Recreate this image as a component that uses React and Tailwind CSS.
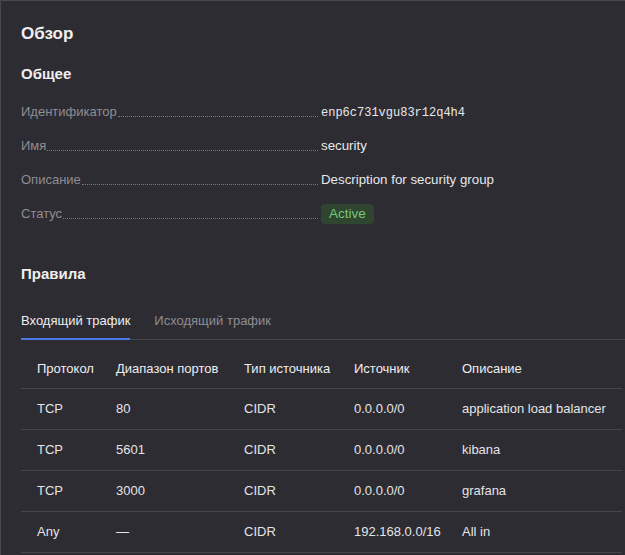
import React, { useState } from 'react';

const info = [
  { label: 'Идентификатор', value: 'enp6c731vgu83r12q4h4', mono: true },
  { label: 'Имя', value: 'security' },
  { label: 'Описание', value: 'Description for security group' },
  { label: 'Статус', badge: 'Active' },
];

const rules = [
  { proto: 'TCP', ports: '80', type: 'CIDR', source: '0.0.0.0/0', desc: 'application load balancer' },
  { proto: 'TCP', ports: '5601', type: 'CIDR', source: '0.0.0.0/0', desc: 'kibana' },
  { proto: 'TCP', ports: '3000', type: 'CIDR', source: '0.0.0.0/0', desc: 'grafana' },
  { proto: 'Any', ports: '—', type: 'CIDR', source: '192.168.0.0/16', desc: 'All in' },
];

const cols = 'grid grid-cols-[79px_128px_110px_108px_1fr]';

export default function App() {
  const [tab, setTab] = useState('in');

  return (
    <div
      className="min-h-screen bg-[#2d2c32] border-t border-l border-[#48474d] pl-[20px] pt-[22px] text-[#e4e4e6] text-[13px]"
      style={{ fontFamily: '"Liberation Sans", Arial, sans-serif' }}
    >
      {/* Header */}
      <h1 className="text-[17px] font-bold leading-[22px] text-[#f0f0f2]">Обзор</h1>
      <h2 className="mt-[19px] text-[15px] font-semibold leading-[20px] text-[#f0f0f2]">Общее</h2>

      {/* Общая информация */}
      <div className="mt-[11px] pr-[3px]">
        {info.map((row) => (
          <div key={row.label} className="flex items-center h-[34px]">
            <div className="flex items-end w-[297px] shrink-0">
              <span className="text-[#8e8d93] leading-[18px]">{row.label}</span>
              <span className="flex-1 mb-[4px] ml-[1px] border-b border-dotted border-[#77767c]" />
            </div>
            <div className="ml-[3px]">
              {row.mono && (
                <span className="text-[12px] text-[#e8e8ea]" style={{ fontFamily: '"Liberation Mono", monospace' }}>
                  {row.value}
                </span>
              )}
              {!row.mono && row.value && <span className="text-[13.3px] text-[#e8e8ea]">{row.value}</span>}
              {row.badge && (
                <span className="inline-flex items-center h-[20px] px-[8px] rounded-[4px] bg-[#30452f] text-[13.5px] text-[#74c878]">
                  {row.badge}
                </span>
              )}
            </div>
          </div>
        ))}
      </div>

      {/* Правила */}
      <h2 className="mt-[33px] text-[15px] font-semibold leading-[20px] text-[#f0f0f2]">Правила</h2>

      <div className="mt-[27px] flex gap-[24px] border-b border-[#46454b]">
        <button
          onClick={() => setTab('in')}
          className={`-mb-px pb-[7px] leading-[20px] border-b-2 ${tab === 'in' ? 'border-[#4a78e6] text-[#eeeef0]' : 'border-transparent text-[#8e8d93]'}`}
        >
          Входящий трафик
        </button>
        <button
          onClick={() => setTab('out')}
          className={`-mb-px pb-[7px] leading-[20px] border-b-2 ${tab === 'out' ? 'border-[#4a78e6] text-[#eeeef0]' : 'border-transparent text-[#8e8d93]'}`}
        >
          Исходящий трафик
        </button>
      </div>

      {/* Таблица */}
      <div className="mt-[9px] mr-[3px]">
        <div className={`${cols} h-[40px] items-center border-b border-[#46454b] text-[#eeeef0]`}>
          <div className="pl-[16px]">Протокол</div>
          <div className="pl-[16px]">Диапазон портов</div>
          <div className="pl-[16px]">Тип источника</div>
          <div className="pl-[16px]">Источник</div>
          <div className="pl-[16px]">Описание</div>
        </div>
        {rules.map((r, i) => (
          <div key={i} className={`${cols} h-[41px] items-center border-b border-[#46454b]`}>
            <div className="pl-[16px]">{r.proto}</div>
            <div className="pl-[16px]">{r.ports}</div>
            <div className="pl-[16px]">{r.type}</div>
            <div className="pl-[16px]">{r.source}</div>
            <div className="pl-[16px]">{r.desc}</div>
          </div>
        ))}
      </div>
    </div>
  );
}
